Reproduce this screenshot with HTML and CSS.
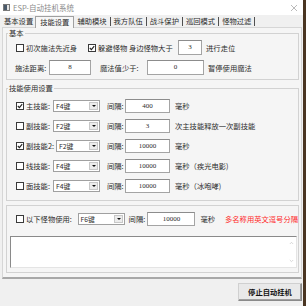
FILE: index.html
```html
<!DOCTYPE html>
<html lang="zh-CN">
  <head>
    <meta charset="UTF-8" />
    <title>ESP-自动挂机系统</title>
    <link rel="stylesheet" href="styles.css">
  </head>
  <body>
    <div class="window">
      <div class="titlebar">
        <svg class="app-icon" viewBox="0 0 7 7">
          <rect x="0.5" y="0.5" width="6" height="6" fill="#e4e4e4" stroke="#7a7a7a" />
          <rect x="1" y="1" width="3" height="5" fill="#4a5a6a" />
        </svg>
        <span class="title">ESP-自动挂机系统</span>
        <svg class="close" viewBox="0 0 6 6">
          <path d="M0 0L6 6M6 0L0 6" stroke="#a8a8a8" stroke-width="0.8" />
        </svg>
      </div>

      <div class="tabs">
        <span class="tab first">基本设置</span>
        <span class="tab active">技能设置</span>
        <span class="tab">辅助模块</span>
        <span class="tab">我方队伍</span>
        <span class="tab">战斗保护</span>
        <span class="tab">巡回模式</span>
        <span class="tab">怪物过滤</span>
      </div>

      <div class="panel">
        <!-- 基本 -->
        <fieldset class="group group-basic">
          <legend>基本</legend>
          <div class="row row-first">
            <span class="cb"></span>
            <span class="cb-label">初次施法先近身</span>
            <span class="cb checked dodge">
              <svg viewBox="0 0 6 6"><path d="M0.8 3L2.4 4.6L5.2 1.2" fill="none" stroke="#222" stroke-width="1.1" /></svg>
            </span>
            <span class="cb-label dodge-label">躲避怪物 身边怪物大于</span>
            <span class="field w-count">3</span>
            <span class="after">进行走位</span>
          </div>
          <div class="row">
            <span class="range-label">施法距离:</span>
            <span class="field w-range">8</span>
            <span class="mana-label">魔法值少于:</span>
            <span class="field w-mana">0</span>
            <span class="after">暂停使用魔法</span>
          </div>
        </fieldset>

        <!-- 技能使用设置 -->
        <fieldset class="group group-skill">
          <legend>技能使用设置</legend>
          <div class="row skill row-first">
            <span class="cb checked">
              <svg viewBox="0 0 6 6"><path d="M0.8 3L2.4 4.6L5.2 1.2" fill="none" stroke="#222" stroke-width="1.1" /></svg>
            </span>
            <span class="skill-label">主技能:</span>
            <span class="combo"><span class="combo-text">F4键</span><span class="combo-btn"></span></span>
            <span class="gap-label">间隔:</span>
            <span class="field w-skill">400</span>
            <span class="after">毫秒</span>
          </div>
          <div class="row skill">
            <span class="cb"></span>
            <span class="skill-label">副技能:</span>
            <span class="combo"><span class="combo-text">F2键</span><span class="combo-btn"></span></span>
            <span class="gap-label">间隔:</span>
            <span class="field w-skill">3</span>
            <span class="after">次主技能释放一次副技能</span>
          </div>
          <div class="row skill">
            <span class="cb checked">
              <svg viewBox="0 0 6 6"><path d="M0.8 3L2.4 4.6L5.2 1.2" fill="none" stroke="#222" stroke-width="1.1" /></svg>
            </span>
            <span class="skill-label wide">副技能2:</span>
            <span class="combo narrow"><span class="combo-text">F2键</span><span class="combo-btn"></span></span>
            <span class="gap-label">间隔:</span>
            <span class="field w-skill">10000</span>
            <span class="after">毫秒</span>
          </div>
          <div class="row skill">
            <span class="cb"></span>
            <span class="skill-label">线技能:</span>
            <span class="combo"><span class="combo-text">F4键</span><span class="combo-btn"></span></span>
            <span class="gap-label">间隔:</span>
            <span class="field w-skill">10000</span>
            <span class="after">毫秒（疾光电影)</span>
          </div>
          <div class="row skill">
            <span class="cb"></span>
            <span class="skill-label">面技能:</span>
            <span class="combo"><span class="combo-text">F4键</span><span class="combo-btn"></span></span>
            <span class="gap-label">间隔:</span>
            <span class="field w-skill">10000</span>
            <span class="after">毫秒（冰咆哮)</span>
          </div>
        </fieldset>

        <!-- 怪物技能 -->
        <fieldset class="group group-monster">
          <div class="row skill row-first">
            <span class="cb"></span>
            <span class="monster-label">以下怪物使用:</span>
            <span class="combo"><span class="combo-text">F6键</span><span class="combo-btn"></span></span>
            <span class="gap-label monster-gap">间隔:</span>
            <span class="field w-monster">10000</span>
            <span class="after">毫秒</span>
            <span class="hint">多名称用英文逗号分隔</span>
          </div>
          <div class="memo">
            <div class="memo-text"></div>
            <div class="memo-scroll">
              <svg viewBox="0 0 6 4"><path d="M1 3.2L3 1.2L5 3.2" fill="none" stroke="#c4c4c4" stroke-width="0.8" /></svg>
              <svg viewBox="0 0 6 4"><path d="M1 0.8L3 2.8L5 0.8" fill="none" stroke="#c4c4c4" stroke-width="0.8" /></svg>
            </div>
          </div>
        </fieldset>
      </div>

      <div class="footer">
        <button class="stop-btn">停止自动挂机</button>
      </div>
    </div>
  </body>
</html>
```

FILE: styles.css
```css
* {
  box-sizing: border-box;
}

body {
  margin: 0;
  background-color: #4a3522;
  font-family: "Noto Sans CJK SC", sans-serif;
  font-size: 7.3px;
  color: #2c2c2c;
}

.window {
  width: 303px;
  height: 306px;
  background-color: #f0f0f0;
  display: flex;
  flex-direction: column;
}

/* title bar */
.titlebar {
  height: 15px;
  background-color: #fff;
  display: flex;
  align-items: center;
  padding: 0 6px 0 3px;
}

.app-icon {
  width: 7px;
  height: 7px;
  margin-right: 3px;
}

.title {
  flex: 1;
  color: #8a8a8a;
  font-size: 7.5px;
}

.close {
  width: 6px;
  height: 6px;
}

/* tabs */
.tabs {
  height: 12px;
  display: flex;
  align-items: flex-end;
  padding-left: 3px;
}

.tab {
  height: 9px;
  line-height: 9px;
  padding: 0 3px;
  margin-bottom: 1px;
  border-right: 1px solid #505050;
  white-space: nowrap;
}

.tab.first {
  padding: 0 2px 0 1px;
  border-right: none;
}

.tab.active {
  height: 12px;
  line-height: 11px;
  padding: 0 4px;
  margin-bottom: -1px;
  background-color: #f7f7f7;
  border: 1px solid #a0a0a0;
  border-bottom: none;
  position: relative;
  z-index: 1;
}

/* panel */
.panel {
  height: 252px;
  margin: 0 1px 0 2px;
  background-color: #f5f5f5;
  border: 1px solid #d6d6d6;
  border-bottom: 2px solid #a8a8a8;
}

.group {
  margin: 0 2px 0 3px;
  padding: 0;
  border: 1px solid #d2d2d2;
  min-width: 0;
}

.group legend {
  margin-left: 1px;
  padding: 0 1px;
  line-height: 9px;
  height: 9px;
}

.group-basic {
  margin-top: 1px;
  padding-bottom: 4px;
}

.group-skill {
  margin-top: 4px;
  padding-bottom: 7px;
}

.group-monster {
  margin-top: 4px;
  padding-bottom: 4px;
}

.row {
  display: flex;
  align-items: center;
  height: 15px;
  margin: 5px 0 0 9px;
  white-space: nowrap;
}

.row.row-first {
  margin-top: 2px;
}

.row.skill {
  height: 14px;
  margin-top: 6px;
}

/* checkbox */
.cb {
  width: 8px;
  height: 8px;
  flex: none;
  border: 1px solid #3a3a3a;
  background-color: #fff;
  display: flex;
}

.cb svg {
  width: 6px;
  height: 6px;
}

.cb-label {
  margin-left: 2px;
}

.cb.dodge {
  margin-left: 11px;
}

.dodge-label {
  width: 80px;
}

/* inputs */
.field {
  height: 15px;
  flex: none;
  background-color: #fff;
  border: 1px solid #a4a4a4;
  border-top-color: #8c8c8c;
  text-align: center;
  line-height: 13px;
  font-size: 7px;
  font-family: "Liberation Serif", serif;
}

.skill .field {
  height: 14px;
  line-height: 12px;
}

.w-count {
  width: 24px;
}

.w-range {
  width: 42px;
}

.w-mana {
  width: 57px;
}

.w-skill {
  width: 45px;
}

.w-monster {
  width: 48px;
}

.after {
  margin-left: 4px;
}

.skill .after {
  margin-left: 5px;
}

.range-label {
  width: 34px;
  margin-left: -1px;
}

.mana-label {
  width: 47px;
  margin-left: 9px;
}

.skill-label {
  width: 27px;
  margin-left: 2px;
}

.skill-label.wide {
  width: 30px;
}

.monster-label {
  width: 52px;
  margin-left: 2px;
}

.gap-label {
  width: 18px;
  margin-left: 7px;
}

.monster-gap {
  width: 19px;
  margin-left: 4px;
}

/* combo box */
.combo {
  width: 47px;
  height: 12px;
  flex: none;
  display: flex;
  align-items: center;
  background-color: #fff;
  border: 1px solid #a0a0a0;
  padding-right: 1px;
}

.combo.narrow {
  width: 44px;
}

.combo-text {
  flex: 1;
  padding-left: 2px;
  font-size: 6.8px;
  line-height: 10px;
}

.combo-btn {
  width: 9px;
  height: 8px;
  background-color: #ececec;
  border: 1px solid #c8c8c8;
  position: relative;
}

.combo-btn::after {
  content: "";
  position: absolute;
  left: 2px;
  top: 2px;
  border-left: 2px solid transparent;
  border-right: 2px solid transparent;
  border-top: 2px solid #111;
}

.hint {
  margin-left: 10px;
  color: #ff2a2a;
}

/* memo */
.memo {
  height: 32px;
  margin: 10px 1px 0 3px;
  display: flex;
  background-color: #fff;
  border: 1px solid #e4e4e4;
  border-top-color: #8a8a8a;
  border-left-color: #8a8a8a;
}

.memo-text {
  flex: 1;
}

.memo-scroll {
  width: 9px;
  display: flex;
  flex-direction: column;
  justify-content: space-between;
  align-items: center;
  padding: 4px 0;
}

.memo-scroll svg {
  width: 5px;
  height: 4px;
}

/* footer */
.footer {
  flex: 1;
  display: flex;
  justify-content: flex-end;
  align-items: flex-start;
  padding: 4px 1px 0 0;
}

.stop-btn {
  width: 64px;
  height: 18px;
  padding: 0;
  font-family: "Noto Sans CJK SC", sans-serif;
  font-size: 7.3px;
  font-weight: bold;
  color: #111;
  background-color: #e9e9e9;
  border: 1px solid #8a8a8a;
  border-top-color: #d0d0d0;
  border-left-color: #d0d0d0;
  box-shadow: inset -1px -1px #a0a0a0;
}
```
